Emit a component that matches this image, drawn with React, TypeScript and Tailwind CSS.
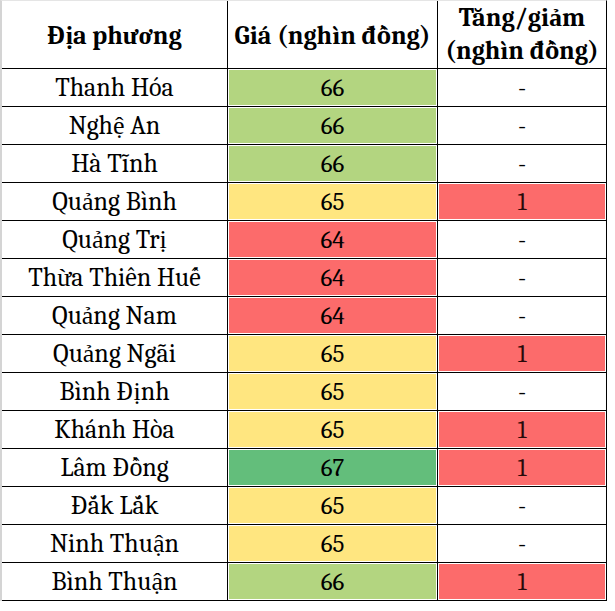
import React from "react";

const rows: [string, number, string][] = [
  ["Thanh Hóa", 66, "-"],
  ["Nghệ An", 66, "-"],
  ["Hà Tĩnh", 66, "-"],
  ["Quảng Bình", 65, "1"],
  ["Quảng Trị", 64, "-"],
  ["Thừa Thiên Huế", 64, "-"],
  ["Quảng Nam", 64, "-"],
  ["Quảng Ngãi", 65, "1"],
  ["Bình Định", 65, "-"],
  ["Khánh Hòa", 65, "1"],
  ["Lâm Đồng", 67, "1"],
  ["Đắk Lắk", 65, "-"],
  ["Ninh Thuận", 65, "-"],
  ["Bình Thuận", 66, "1"],
];

function priceBg(v: number) {
  if (v === 64) return "bg-[#fc6b6b]";
  if (v === 65) return "bg-[#ffe680]";
  if (v === 66) return "bg-[#b3d580]";
  return "bg-[#63be7b]";
}

export default function App() {
  return (
    <div className="w-[615px] h-[611px] bg-white">
      <div className="w-[607px] border-l-2 border-l-[#d4d4d4] border-r border-r-black border-t border-t-[#e5e5e5] text-black">
        <div className="flex h-[68px] border-b border-black">
          <div className="w-[226px] border-r border-black flex items-center justify-center pt-1 font-bold text-[26px] font-serif [font-family:Liberation_Serif,serif]">Địa phương</div>
          <div className="w-[210px] border-r border-black flex items-center justify-center pt-1 font-bold text-[26px] font-serif [font-family:Liberation_Serif,serif]">Giá (nghìn đồng)</div>
          <div className="flex-1 flex flex-col items-center justify-center">
            <span className="font-bold text-[26px] leading-[33px] font-serif [font-family:Liberation_Serif,serif]">Tăng/giảm</span>
            <span className="font-bold text-[26px] leading-[33px] font-serif [font-family:Liberation_Serif,serif]">(nghìn đồng)</span>
          </div>
        </div>
        {rows.map(([name, price, diff]) => (
          <div key={name} className="flex h-[38px] border-b border-black">
            <div className="w-[226px] border-r border-black flex items-center justify-center text-[26px] leading-none font-serif [font-family:Liberation_Serif,serif]">{name}</div>
            <div className="w-[210px] border-r border-black p-[1px] flex">
              <div className={`flex-1 flex items-center justify-center text-[25px] leading-none font-serif ${priceBg(price)}`}>{price}</div>
            </div>
            <div className="flex-1 p-[1px] flex">
              <div className={`flex-1 flex items-center justify-center text-[25px] leading-none font-serif ${diff === "1" ? "bg-[#fc6b6b] text-[#2a0a0a]" : ""}`}>{diff}</div>
            </div>
          </div>
        ))}
      </div>
    </div>
  );
}
